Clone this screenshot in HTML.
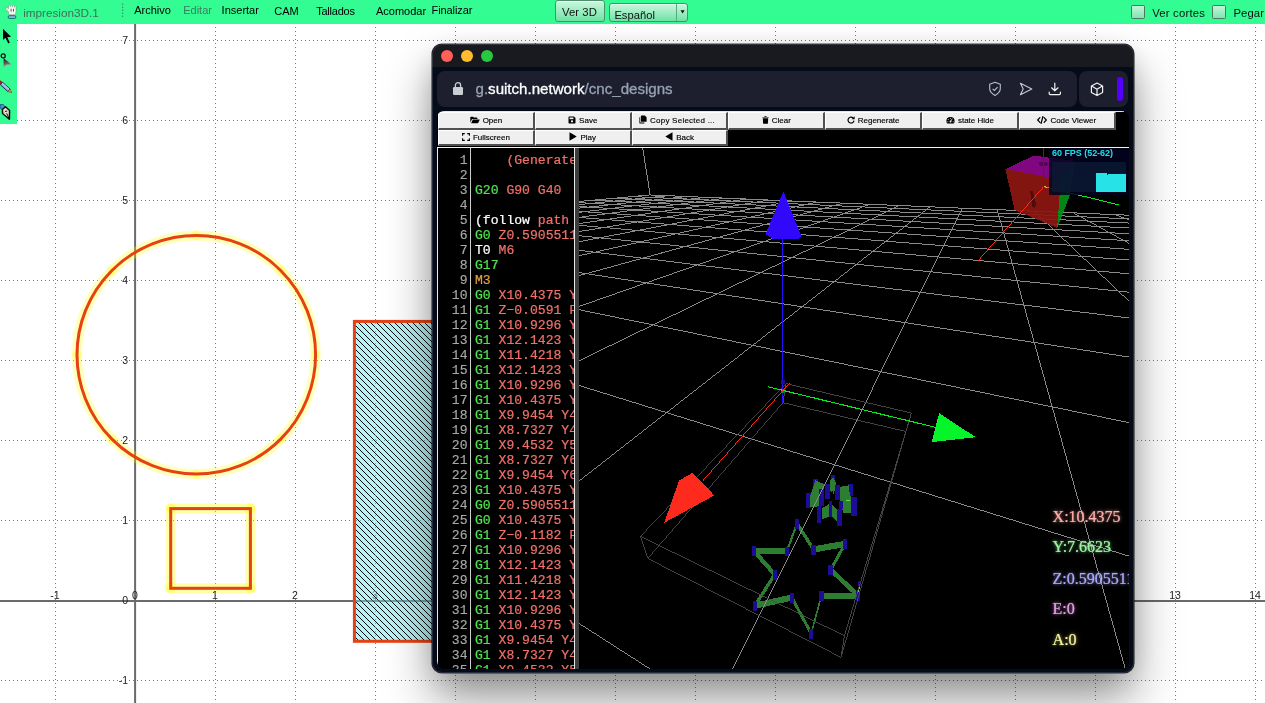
<!DOCTYPE html>
<html><head><meta charset="utf-8"><title>impresion3D</title>
<style>
html,body{margin:0;padding:0}
body{width:1265px;height:703px;position:relative;overflow:hidden;background:#fff;font-family:"Liberation Sans",sans-serif}
.abs{position:absolute}
#topbar{position:absolute;left:0;top:0;width:1265px;height:24px;background:#32fc92}
#lefttb{position:absolute;left:0;top:24px;width:17px;height:99.5px;background:#32fc92}
.menu{position:absolute;top:3.5px;font-size:11px;color:#000;white-space:pre;line-height:13px}
.gbtn{position:absolute;box-sizing:border-box;border:1px solid #4e8e6c;border-radius:3px;background:linear-gradient(#c9f7de,#6fe3a6);box-shadow:inset 0 1px 0 #e8fff2}
.axl{position:absolute;font-size:10.5px;color:#222;line-height:10px;white-space:pre}
#win{position:absolute;left:432.2px;top:44.4px;width:701.4px;height:628.7px;border-radius:10px;background:#060b1a;box-shadow:0 0 0 0.6px rgba(0,0,0,.75),0 26px 48px 0 rgba(0,0,0,.4),0 8px 30px -6px rgba(0,0,0,.2);overflow:hidden}
.wb{position:absolute;box-sizing:border-box;height:17px;background:#efefef;border-top:1px solid #fff;border-left:1px solid #fff;border-right:2px solid #505050;border-bottom:2px solid #505050;font-size:8px;line-height:15px;color:#000;text-align:center;white-space:pre;-webkit-text-stroke:0.15px #000}
.wb svg{vertical-align:-1px;margin-right:3px}
.cl{will-change:transform;position:absolute;left:0;height:15px;line-height:15px;white-space:pre;font-family:"Liberation Mono",monospace;font-size:13.08px;-webkit-text-stroke:0.22px}
.ln{will-change:transform;position:absolute;left:0;width:29.5px;text-align:right;height:15px;line-height:15px;font-family:"Liberation Mono",monospace;font-size:13.08px;color:#a8a8a8;-webkit-text-stroke:0.15px}
.g{color:#4ee44e}.s{color:#f2706a}.w{color:#fff}.o{color:#e2a03c}
.ro{position:absolute;font-family:"Liberation Serif",serif;font-size:16px;line-height:18px;white-space:pre}
</style></head><body><div id="root" style="position:absolute;left:0;top:0;width:1265px;height:703px;will-change:transform">
<svg class="abs" style="left:0;top:0" width="1265" height="703" viewBox="0 0 1265 703">
<line x1="55.5" y1="23" x2="55.5" y2="703" stroke="#7d7d7d" stroke-width="1" stroke-dasharray="1 3" stroke-dashoffset="0"/>
<line x1="215.5" y1="23" x2="215.5" y2="703" stroke="#7d7d7d" stroke-width="1" stroke-dasharray="1 3" stroke-dashoffset="0"/>
<line x1="295.5" y1="23" x2="295.5" y2="703" stroke="#7d7d7d" stroke-width="1" stroke-dasharray="1 3" stroke-dashoffset="0"/>
<line x1="375.5" y1="23" x2="375.5" y2="703" stroke="#7d7d7d" stroke-width="1" stroke-dasharray="1 3" stroke-dashoffset="0"/>
<line x1="455.5" y1="23" x2="455.5" y2="703" stroke="#7d7d7d" stroke-width="1" stroke-dasharray="1 3" stroke-dashoffset="0"/>
<line x1="535.5" y1="23" x2="535.5" y2="703" stroke="#7d7d7d" stroke-width="1" stroke-dasharray="1 3" stroke-dashoffset="0"/>
<line x1="615.5" y1="23" x2="615.5" y2="703" stroke="#7d7d7d" stroke-width="1" stroke-dasharray="1 3" stroke-dashoffset="0"/>
<line x1="695.5" y1="23" x2="695.5" y2="703" stroke="#7d7d7d" stroke-width="1" stroke-dasharray="1 3" stroke-dashoffset="0"/>
<line x1="775.5" y1="23" x2="775.5" y2="703" stroke="#7d7d7d" stroke-width="1" stroke-dasharray="1 3" stroke-dashoffset="0"/>
<line x1="855.5" y1="23" x2="855.5" y2="703" stroke="#7d7d7d" stroke-width="1" stroke-dasharray="1 3" stroke-dashoffset="0"/>
<line x1="935.5" y1="23" x2="935.5" y2="703" stroke="#7d7d7d" stroke-width="1" stroke-dasharray="1 3" stroke-dashoffset="0"/>
<line x1="1015.5" y1="23" x2="1015.5" y2="703" stroke="#7d7d7d" stroke-width="1" stroke-dasharray="1 3" stroke-dashoffset="0"/>
<line x1="1095.5" y1="23" x2="1095.5" y2="703" stroke="#7d7d7d" stroke-width="1" stroke-dasharray="1 3" stroke-dashoffset="0"/>
<line x1="1175.5" y1="23" x2="1175.5" y2="703" stroke="#7d7d7d" stroke-width="1" stroke-dasharray="1 3" stroke-dashoffset="0"/>
<line x1="1255.5" y1="23" x2="1255.5" y2="703" stroke="#7d7d7d" stroke-width="1" stroke-dasharray="1 3" stroke-dashoffset="0"/>
<line x1="0" y1="40.5" x2="1265" y2="40.5" stroke="#7d7d7d" stroke-width="1" stroke-dasharray="1 3" stroke-dashoffset="3"/>
<line x1="0" y1="120.5" x2="1265" y2="120.5" stroke="#7d7d7d" stroke-width="1" stroke-dasharray="1 3" stroke-dashoffset="3"/>
<line x1="0" y1="200.5" x2="1265" y2="200.5" stroke="#7d7d7d" stroke-width="1" stroke-dasharray="1 3" stroke-dashoffset="3"/>
<line x1="0" y1="280.5" x2="1265" y2="280.5" stroke="#7d7d7d" stroke-width="1" stroke-dasharray="1 3" stroke-dashoffset="3"/>
<line x1="0" y1="360.5" x2="1265" y2="360.5" stroke="#7d7d7d" stroke-width="1" stroke-dasharray="1 3" stroke-dashoffset="3"/>
<line x1="0" y1="440.5" x2="1265" y2="440.5" stroke="#7d7d7d" stroke-width="1" stroke-dasharray="1 3" stroke-dashoffset="3"/>
<line x1="0" y1="520.5" x2="1265" y2="520.5" stroke="#7d7d7d" stroke-width="1" stroke-dasharray="1 3" stroke-dashoffset="3"/>
<line x1="0" y1="680.5" x2="1265" y2="680.5" stroke="#7d7d7d" stroke-width="1" stroke-dasharray="1 3" stroke-dashoffset="3"/>
<line x1="135.1" y1="24" x2="135.1" y2="703" stroke="#6a6a6a" stroke-width="2"/>
<line x1="0" y1="601" x2="1265" y2="601" stroke="#6a6a6a" stroke-width="2"/>
<defs><pattern id="hatch" width="6" height="6" patternUnits="userSpaceOnUse"><rect width="6" height="6" fill="#b9f1f5"/><path d="M-1,-1 L7,7 M-1,5 L1,7 M5,-1 L7,1" stroke="#000" stroke-width="0.95"/></pattern></defs>
<rect x="354.4" y="321.4" width="120" height="319.9" fill="url(#hatch)" stroke="#e64114" stroke-width="3"/><line x1="356" y1="601" x2="440" y2="601" stroke="#3c6e78" stroke-opacity="0.6" stroke-width="2"/><line x1="375.5" y1="323" x2="375.5" y2="640" stroke="#4f8a94" stroke-opacity="0.7" stroke-width="1" stroke-dasharray="1 3" stroke-dashoffset="0"/><path d="M356,360.5H440M356,440.5H440M356,520.5H440" stroke="#4f8a94" stroke-opacity="0.7" stroke-width="1" stroke-dasharray="1 3" fill="none"/>
<circle cx="196.3" cy="354.8" r="119.3" fill="none" stroke="#ffff00" stroke-opacity="0.28" stroke-width="10"/>
<circle cx="315.6" cy="354.8" r="4.8" fill="#ffff00" fill-opacity="0.3"/>
<circle cx="280.7" cy="439.2" r="4.8" fill="#ffff00" fill-opacity="0.3"/>
<circle cx="196.3" cy="474.1" r="4.8" fill="#ffff00" fill-opacity="0.3"/>
<circle cx="111.9" cy="439.2" r="4.8" fill="#ffff00" fill-opacity="0.3"/>
<circle cx="77.0" cy="354.8" r="4.8" fill="#ffff00" fill-opacity="0.3"/>
<circle cx="111.9" cy="270.4" r="4.8" fill="#ffff00" fill-opacity="0.3"/>
<circle cx="196.3" cy="235.5" r="4.8" fill="#ffff00" fill-opacity="0.3"/>
<circle cx="280.7" cy="270.4" r="4.8" fill="#ffff00" fill-opacity="0.3"/>
<circle cx="196.3" cy="354.8" r="119.3" fill="none" stroke="#e64114" stroke-width="3"/>
<line x1="170.7" y1="508.6" x2="250.4" y2="508.6" stroke="#ffff00" stroke-opacity="0.34" stroke-width="10" stroke-linecap="round"/>
<line x1="250.4" y1="508.6" x2="250.4" y2="588.3" stroke="#ffff00" stroke-opacity="0.34" stroke-width="10" stroke-linecap="round"/>
<line x1="250.4" y1="588.3" x2="170.7" y2="588.3" stroke="#ffff00" stroke-opacity="0.34" stroke-width="10" stroke-linecap="round"/>
<line x1="170.7" y1="588.3" x2="170.7" y2="508.6" stroke="#ffff00" stroke-opacity="0.34" stroke-width="10" stroke-linecap="round"/>
<rect x="170.7" y="508.6" width="79.7" height="79.7" fill="none" stroke="#e64114" stroke-width="3"/>
</svg>
<div class="axl" style="left:108px;width:20px;text-align:right;top:35px">7</div>
<div class="axl" style="left:108px;width:20px;text-align:right;top:115px">6</div>
<div class="axl" style="left:108px;width:20px;text-align:right;top:195px">5</div>
<div class="axl" style="left:108px;width:20px;text-align:right;top:275px">4</div>
<div class="axl" style="left:108px;width:20px;text-align:right;top:355px">3</div>
<div class="axl" style="left:108px;width:20px;text-align:right;top:435px">2</div>
<div class="axl" style="left:108px;width:20px;text-align:right;top:515px">1</div>
<div class="axl" style="left:108px;width:20px;text-align:right;top:595px">0</div>
<div class="axl" style="left:108px;width:20px;text-align:right;top:675px">-1</div>
<div class="axl" style="left:40px;width:30px;text-align:center;top:590px">-1</div>
<div class="axl" style="left:120px;width:30px;text-align:center;top:590px">0</div>
<div class="axl" style="left:200px;width:30px;text-align:center;top:590px">1</div>
<div class="axl" style="left:280px;width:30px;text-align:center;top:590px">2</div>
<div class="axl" style="left:360px;width:30px;text-align:center;top:590px;opacity:0.5">3</div>
<div class="axl" style="left:440px;width:30px;text-align:center;top:590px">4</div>
<div class="axl" style="left:520px;width:30px;text-align:center;top:590px">5</div>
<div class="axl" style="left:600px;width:30px;text-align:center;top:590px">6</div>
<div class="axl" style="left:680px;width:30px;text-align:center;top:590px">7</div>
<div class="axl" style="left:760px;width:30px;text-align:center;top:590px">8</div>
<div class="axl" style="left:840px;width:30px;text-align:center;top:590px">9</div>
<div class="axl" style="left:920px;width:30px;text-align:center;top:590px">10</div>
<div class="axl" style="left:1000px;width:30px;text-align:center;top:590px">11</div>
<div class="axl" style="left:1080px;width:30px;text-align:center;top:590px">12</div>
<div class="axl" style="left:1160px;width:30px;text-align:center;top:590px">13</div>
<div class="axl" style="left:1240px;width:30px;text-align:center;top:590px">14</div>
<div id="topbar"></div><div id="lefttb"></div>
<svg class="abs" style="left:0;top:0" width="24" height="24" viewBox="0 0 24 24">
<path d="M8.5,13.2 L8.5,11.7 L5.7,9.3 Q5,7.7 6.5,7.4 L8.5,8.7 L8.5,5.1 Q9.25,3.7 10,5.1 L10,6.4 L10.5,6.4 L10.5,5 Q11.25,3.6 12,5 L12,6.4 L12.6,6.4 L12.6,5.1 Q13.35,3.7 14.1,5.1 L14.1,6.9 L14.6,6.9 L14.6,6.4 Q15.3,5.1 16,6.4 L16,11.6 L15.4,14.7 L8.9,14.7 Z" fill="#f7f4f4" stroke="#8c7a7a" stroke-opacity="0.75" stroke-width="0.6" stroke-linejoin="round"/>
<path d="M11.1,8.8 V11.6 M13.5,8.8 V11.6" stroke="#3a3a3a" stroke-width="0.85" fill="none"/>
<path d="M10.25,5.2 V7.4 M12.3,5.1 V7.4 M14.3,6 V7.6" stroke="#b9aaaa" stroke-width="0.5" fill="none"/>
<rect x="8.3" y="15.8" width="7.4" height="2.5" rx="0.8" fill="#7fdcea" stroke="#124a5c" stroke-width="0.9"/>
</svg>
<div class="abs" style="left:23.2px;top:6px;font-size:11.75px;line-height:14px;color:#41705c;white-space:pre;letter-spacing:-0.02px">impresion3D.1</div>
<svg class="abs" style="left:121.2px;top:3px" width="4" height="16"><g fill="#2a9f63"><rect x="1" y="0.5" width="1.2" height="1.5"/><rect x="1" y="3.5" width="1.2" height="1.5"/><rect x="1" y="6.5" width="1.2" height="1.5"/><rect x="1" y="9.5" width="1.2" height="1.5"/><rect x="1" y="12.5" width="1.2" height="1.5"/></g></svg>
<div class="menu" style="left:134.2px;top:3.5px;color:#000;letter-spacing:0">Archivo</div>
<div class="menu" style="left:183.2px;top:3.5px;color:#3a7d5e;letter-spacing:0">Editar</div>
<div class="menu" style="left:221.6px;top:3.5px;color:#000;letter-spacing:0">Insertar</div>
<div class="menu" style="left:274.3px;top:4.5px;color:#000;letter-spacing:0">CAM</div>
<div class="menu" style="left:316.2px;top:4.5px;color:#000;letter-spacing:-0.22px">Tallados</div>
<div class="menu" style="left:376px;top:4.5px;color:#000;letter-spacing:0">Acomodar</div>
<div class="menu" style="left:431.6px;top:3.5px;color:#000;letter-spacing:-0.1px">Finalizar</div>
<div class="gbtn" style="left:554.5px;top:0px;width:50px;height:22px"></div>
<div class="abs" style="left:554.5px;width:50px;text-align:center;top:4.6px;font-size:11.3px;line-height:14px;color:#111;white-space:pre;letter-spacing:0.05px">Ver 3D</div>
<div class="gbtn" style="left:609.2px;top:2.5px;width:79.3px;height:19.5px"></div>
<div class="abs" style="left:675.8px;top:3.5px;width:1px;height:17.5px;background:#5aa880"></div>
<div class="abs" style="left:614.4px;top:7.6px;font-size:11.2px;line-height:14px;color:#111;white-space:pre;letter-spacing:0.02px">Español</div>
<svg class="abs" style="left:679px;top:9px" width="8" height="6"><path d="M1.5,1.2 L5.7,1.2 L3.6,4.6 Z" fill="#111"/></svg>
<div class="abs" style="left:1131px;top:5.2px;width:13.6px;height:13.6px;box-sizing:border-box;border:1px solid #4f7563;border-radius:1.5px;background:linear-gradient(#c4f5da,#7ee6af)"></div>
<div class="abs" style="left:1212px;top:5.2px;width:13.6px;height:13.6px;box-sizing:border-box;border:1px solid #4f7563;border-radius:1.5px;background:linear-gradient(#c4f5da,#7ee6af)"></div>
<div class="abs" style="left:1152.2px;top:5.5px;font-size:11.3px;line-height:14px;color:#111;white-space:pre;letter-spacing:0.2px">Ver cortes</div>
<div class="abs" style="left:1233.4px;top:5.5px;font-size:11.3px;line-height:14px;color:#111;white-space:pre;letter-spacing:0.1px">Pegar</div>
<svg class="abs" style="left:0;top:24px" width="17" height="100" viewBox="0 0 17 100"><defs><linearGradient id="ng" x1="0.2" y1="0" x2="0.4" y2="1"><stop offset="0" stop-color="#1c1c1c"/><stop offset="0.55" stop-color="#5c5c5c"/><stop offset="1" stop-color="#c4c4c4"/></linearGradient><linearGradient id="pg" x1="0" y1="0" x2="0" y2="1"><stop offset="0" stop-color="#cfe6fa"/><stop offset="1" stop-color="#5aa0e0"/></linearGradient></defs><path d="M3,4.8 L3,16 L5.4,13.8 L8.3,19.4 L9.8,18.6 L7.2,13.3 L11,12.8 Z" fill="#000"/><circle cx="3.2" cy="31.9" r="2" fill="none" stroke="#111" stroke-width="1.3"/><path d="M3.6,34 L11.4,40.6 L6.4,40.8 L3.6,43.6 Z" fill="url(#ng)"/><g transform="translate(0,58.2) rotate(42)"><rect x="-1" y="-1.7" width="3" height="3.4" fill="#b01a14"/><rect x="2" y="-1.7" width="10" height="3.4" fill="url(#pg)" stroke="#1a2238" stroke-width="0.8"/><path d="M12,-1.7 L15.6,0 L12,1.7 Z" fill="#f0a860" stroke="#6a3a14" stroke-width="0.6"/></g><path d="M0,80.8 L3,80.3 L5.3,83 L2.4,85.6 L0,84 Z" fill="#4a90d0" stroke="#1a3a6a" stroke-width="0.7"/><path d="M2.4,85.5 L5.5,82.8 L9.6,86.5 L9.4,95.3 L2.6,89.5 Z" fill="#ebe2cc" stroke="#0c0c0c" stroke-width="1.5" stroke-linejoin="round"/><path d="M9.2,94.6 L6.6,89.2" stroke="#000" stroke-width="0.9"/><path d="M5,88.2 Q5.6,86.4 7.2,87.2" stroke="#000" stroke-width="0.9" fill="none"/></svg>
<div id="win">
<div class="abs" style="left:0;top:0;width:701px;height:22.6px;background:#191a1f"></div>
<div class="abs" style="left:8.7px;top:5.5px;width:12.2px;height:12.2px;border-radius:50%;background:#fe5f57"></div>
<div class="abs" style="left:28.7px;top:5.5px;width:12.2px;height:12.2px;border-radius:50%;background:#febc2e"></div>
<div class="abs" style="left:48.7px;top:5.5px;width:12.2px;height:12.2px;border-radius:50%;background:#28c840"></div>
<div class="abs" style="left:5.2px;top:26.6px;width:640px;height:35.7px;border-radius:8px;background:#1d1f2e"></div>
<div class="abs" style="left:647.1px;top:26.6px;width:49px;height:35.7px;border-radius:8px;background:#1d1f2e"></div>
<svg class="abs" style="left:19.8px;top:36.6px" width="12" height="15" viewBox="0 0 12 15"><path d="M3.4,6.4 V4.2 A2.6,2.6 0 0 1 8.6,4.2 V6.4" fill="none" stroke="#c9ced3" stroke-width="1.3"/><rect x="1" y="6" width="10" height="8" rx="1.2" fill="#c9ced3"/></svg>
<div class="abs" style="left:43.3px;top:35.6px;font-size:15.1px;line-height:18px;white-space:pre;color:#98a3b4;-webkit-text-stroke:0.3px"><span>g.</span><span style="color:#fff">suitch.network</span><span>/cnc_designs</span></div>
<svg class="abs" style="left:554.8px;top:35.6px" width="16" height="18" viewBox="0 0 16 18"><path d="M8,2.2 L13.3,4.2 V8.6 Q13.3,12.8 8,15.4 Q2.7,12.8 2.7,8.6 V4.2 Z" fill="none" stroke="#b9bec8" stroke-width="1.1" stroke-linejoin="round"/><path d="M5.6,8.8 L7.4,10.5 L10.6,7.2" fill="none" stroke="#b9bec8" stroke-width="1.1"/></svg>
<svg class="abs" style="left:584.8px;top:35.6px" width="18" height="18" viewBox="0 0 18 18"><path d="M3.4,3.2 L14.8,9 L3.4,14.8 L6.2,9 Z" fill="none" stroke="#c4c8d0" stroke-width="1.1" stroke-linejoin="round"/></svg>
<svg class="abs" style="left:613.8px;top:35.6px" width="18" height="18" viewBox="0 0 18 18"><path d="M8.8,3.2 V10.6 M5.6,7.8 L8.8,10.8 L12,7.8 M3.2,12 V13.6 Q3.2,14.6 4.2,14.6 H13.4 Q14.4,14.6 14.4,13.6 V12" fill="none" stroke="#f1f2f5" stroke-width="1.2" stroke-linecap="round" stroke-linejoin="round"/></svg>
<svg class="abs" style="left:655.8px;top:35.6px" width="18" height="18" viewBox="0 0 18 18"><path d="M9,3 L14.6,6 V12.4 L9,15.6 L3.4,12.4 V6 Z M3.6,6.1 L9,9.2 L14.4,6.1 M9,9.2 V15.4" fill="none" stroke="#f1f2f5" stroke-width="1.2" stroke-linejoin="round"/></svg>
<div class="abs" style="left:684.7px;top:32.6px;width:6.2px;height:24.2px;border-radius:3.1px;background:#5400fe"></div>
<div class="abs" style="left:4.8px;top:66.6px;width:692.5px;height:558.4px;background:#000;border-radius:7px 7px 8px 8px;overflow:hidden">
<div class="abs" style="left:0;top:0;width:687px;height:1.2px;background:#e6e6e6"></div>
<div class="wb" style="left:1.0px;top:1.4px;width:96.9px;height:17.4px;line-height:15.6px"><svg width="10" height="8" viewBox="0 0 10 8"><path d="M0.3,6.6 L0.3,1.3 Q0.3,0.7 0.9,0.7 L3,0.7 L3.9,1.6 L6.8,1.6 Q7.4,1.6 7.4,2.2 L7.4,2.9 L2.7,2.9 Q2.1,2.9 1.8,3.5 Z M1.1,7.2 L2.6,3.9 Q2.8,3.5 3.3,3.5 L9.4,3.5 Q9.9,3.5 9.6,4.1 L8.3,6.8 Q8.1,7.2 7.6,7.2 Z" fill="#000"/></svg>Open</div>
<div class="wb" style="left:97.8px;top:1.4px;width:96.9px;height:17.4px;line-height:15.6px"><svg width="8" height="8" viewBox="0 0 8 8"><path d="M0.5,1.2 Q0.5,0.5 1.2,0.5 L5.9,0.5 L7.5,2.1 L7.5,6.8 Q7.5,7.5 6.8,7.5 L1.2,7.5 Q0.5,7.5 0.5,6.8 Z" fill="#000"/><rect x="1.6" y="1.5" width="3.8" height="1.7" fill="#efefef"/><circle cx="4" cy="5.3" r="1.15" fill="#efefef"/></svg>Save</div>
<div class="wb" style="left:194.6px;top:1.4px;width:96.9px;height:17.4px;line-height:15.6px;letter-spacing:0.24px;padding-right:5px"><svg width="8" height="9" viewBox="0 0 8 9"><path d="M2.4,0.4 L5.8,0.4 L7.6,2.2 L7.6,6.2 Q7.6,6.7 7.1,6.7 L2.4,6.7 Q1.9,6.7 1.9,6.2 L1.9,0.9 Q1.9,0.4 2.4,0.4 Z" fill="#000"/><path d="M1.2,2.2 L0.4,2.2 L0.4,8.1 Q0.4,8.6 0.9,8.6 L5.4,8.6 L5.4,7.4 L1.2,7.4 Z" fill="#000"/></svg>Copy Selected ...</div>
<div class="wb" style="left:291.4px;top:1.4px;width:96.9px;height:17.4px;line-height:15.6px"><svg width="7" height="8" viewBox="0 0 7 8"><path d="M0.3,1.6 L0.3,0.9 L2.2,0.9 L2.6,0.3 L4.4,0.3 L4.8,0.9 L6.7,0.9 L6.7,1.6 Z M0.8,2.2 L6.2,2.2 L5.9,7.2 Q5.85,7.8 5.3,7.8 L1.7,7.8 Q1.15,7.8 1.1,7.2 Z" fill="#000"/></svg>Clear</div>
<div class="wb" style="left:388.2px;top:1.4px;width:96.9px;height:17.4px;line-height:15.6px"><svg width="8" height="8" viewBox="0 0 8 8"><path d="M6.3,2.1 A3,3 0 1 0 7,4.6" fill="none" stroke="#000" stroke-width="1.15"/><path d="M4.7,3.2 L7.6,3.2 L7.6,0.3 Z" fill="#000"/></svg>Regenerate</div>
<div class="wb" style="left:485.0px;top:1.4px;width:96.9px;height:17.4px;line-height:15.6px"><svg width="9" height="8" viewBox="0 0 9 8"><path d="M0.4,5 A4.1,4.1 0 0 1 8.6,5 Q8.6,6.6 7.8,7.6 L1.2,7.6 Q0.4,6.6 0.4,5 Z" fill="#000"/><circle cx="4.5" cy="5.6" r="1" fill="#efefef"/><path d="M4.5,5.6 L6.3,2.6" stroke="#efefef" stroke-width="0.8"/><circle cx="2.2" cy="3.6" r="0.5" fill="#efefef"/><circle cx="4.5" cy="2.3" r="0.5" fill="#efefef"/><circle cx="1.8" cy="5.8" r="0.5" fill="#efefef"/><circle cx="7.2" cy="5.8" r="0.5" fill="#efefef"/></svg>state Hide</div>
<div class="wb" style="left:581.8px;top:1.4px;width:96.9px;height:17.4px;line-height:15.6px"><svg width="10" height="8" viewBox="0 0 10 8"><path d="M2.9,1.6 L0.7,4 L2.9,6.4 M7.1,1.6 L9.3,4 L7.1,6.4 M5.9,0.5 L4.1,7.5" fill="none" stroke="#000" stroke-width="1.2" stroke-linecap="round" stroke-linejoin="round"/></svg>Code Viewer</div>
<div class="wb" style="left:1.0px;top:18.8px;width:96.9px;height:16.4px;line-height:14.6px"><svg width="8" height="8" viewBox="0 0 8 8"><path d="M0.6,2.8 V0.6 H2.8 M5.2,0.6 H7.4 V2.8 M7.4,5.2 V7.4 H5.2 M2.8,7.4 H0.6 V5.2" fill="none" stroke="#000" stroke-width="1.1"/></svg>Fullscreen</div>
<div class="wb" style="left:97.8px;top:18.8px;width:96.9px;height:16.4px;line-height:14.6px"><svg width="8" height="9" viewBox="0 0 7 8"><path d="M0.4,0.2 L6.8,4 L0.4,7.8 Z" fill="#000"/></svg>Play</div>
<div class="wb" style="left:194.6px;top:18.8px;width:96.9px;height:16.4px;line-height:14.6px"><svg width="8" height="9" viewBox="0 0 7 8"><path d="M6.6,0.2 L0.2,4 L6.6,7.8 Z" fill="#000"/></svg>Back</div>
<div class="abs" style="left:0;top:35.6px;width:693px;height:1px;background:#f2f2f2"></div>
<div class="abs" style="left:0;top:36.6px;width:138px;height:522px;background:#000;overflow:hidden;box-sizing:border-box;border-left:1px solid #e8e8e8;border-right:1px solid #e8e8e8">
<div class="abs" style="left:32px;top:0;width:1px;height:522px;background:#cfcfcf"></div>
<div class="ln" style="top:5.2px">1</div>
<div class="cl" style="left:36.6px;top:5.2px"><span class="s">    (Generated by</span></div>
<div class="ln" style="top:20.2px">2</div>
<div class="ln" style="top:35.2px">3</div>
<div class="cl" style="left:36.6px;top:35.2px"><span class="g">G20</span><span class="s"> G90 G40</span></div>
<div class="ln" style="top:50.2px">4</div>
<div class="ln" style="top:65.2px">5</div>
<div class="cl" style="left:36.6px;top:65.2px"><span class="w">(follow</span><span class="s"> path 1)</span></div>
<div class="ln" style="top:80.2px">6</div>
<div class="cl" style="left:36.6px;top:80.2px"><span class="g">G0</span><span class="s"> Z0.59055118</span></div>
<div class="ln" style="top:95.2px">7</div>
<div class="cl" style="left:36.6px;top:95.2px"><span class="w">T0</span><span class="s"> M6</span></div>
<div class="ln" style="top:110.2px">8</div>
<div class="cl" style="left:36.6px;top:110.2px"><span class="g">G17</span></div>
<div class="ln" style="top:125.2px">9</div>
<div class="cl" style="left:36.6px;top:125.2px"><span class="o">M3</span></div>
<div class="ln" style="top:140.2px">10</div>
<div class="cl" style="left:36.6px;top:140.2px"><span class="g">G0</span><span class="s"> X10.4375 Y7.6623</span></div>
<div class="ln" style="top:155.2px">11</div>
<div class="cl" style="left:36.6px;top:155.2px"><span class="g">G1</span><span class="s"> Z−0.0591 F30</span></div>
<div class="ln" style="top:170.2px">12</div>
<div class="cl" style="left:36.6px;top:170.2px"><span class="g">G1</span><span class="s"> X10.9296 Y6.81</span></div>
<div class="ln" style="top:185.2px">13</div>
<div class="cl" style="left:36.6px;top:185.2px"><span class="g">G1</span><span class="s"> X12.1423 Y6.81</span></div>
<div class="ln" style="top:200.2px">14</div>
<div class="cl" style="left:36.6px;top:200.2px"><span class="g">G1</span><span class="s"> X11.4218 Y5.83</span></div>
<div class="ln" style="top:215.2px">15</div>
<div class="cl" style="left:36.6px;top:215.2px"><span class="g">G1</span><span class="s"> X12.1423 Y4.85</span></div>
<div class="ln" style="top:230.2px">16</div>
<div class="cl" style="left:36.6px;top:230.2px"><span class="g">G1</span><span class="s"> X10.9296 Y4.85</span></div>
<div class="ln" style="top:245.2px">17</div>
<div class="cl" style="left:36.6px;top:245.2px"><span class="g">G1</span><span class="s"> X10.4375 Y3.99</span></div>
<div class="ln" style="top:260.2px">18</div>
<div class="cl" style="left:36.6px;top:260.2px"><span class="g">G1</span><span class="s"> X9.9454 Y4.85</span></div>
<div class="ln" style="top:275.2px">19</div>
<div class="cl" style="left:36.6px;top:275.2px"><span class="g">G1</span><span class="s"> X8.7327 Y4.85</span></div>
<div class="ln" style="top:290.2px">20</div>
<div class="cl" style="left:36.6px;top:290.2px"><span class="g">G1</span><span class="s"> X9.4532 Y5.83</span></div>
<div class="ln" style="top:305.2px">21</div>
<div class="cl" style="left:36.6px;top:305.2px"><span class="g">G1</span><span class="s"> X8.7327 Y6.81</span></div>
<div class="ln" style="top:320.2px">22</div>
<div class="cl" style="left:36.6px;top:320.2px"><span class="g">G1</span><span class="s"> X9.9454 Y6.81</span></div>
<div class="ln" style="top:335.2px">23</div>
<div class="cl" style="left:36.6px;top:335.2px"><span class="g">G1</span><span class="s"> X10.4375 Y7.66</span></div>
<div class="ln" style="top:350.2px">24</div>
<div class="cl" style="left:36.6px;top:350.2px"><span class="g">G0</span><span class="s"> Z0.59055118</span></div>
<div class="ln" style="top:365.2px">25</div>
<div class="cl" style="left:36.6px;top:365.2px"><span class="g">G0</span><span class="s"> X10.4375 Y7.66</span></div>
<div class="ln" style="top:380.2px">26</div>
<div class="cl" style="left:36.6px;top:380.2px"><span class="g">G1</span><span class="s"> Z−0.1182 F30</span></div>
<div class="ln" style="top:395.2px">27</div>
<div class="cl" style="left:36.6px;top:395.2px"><span class="g">G1</span><span class="s"> X10.9296 Y6.81</span></div>
<div class="ln" style="top:410.2px">28</div>
<div class="cl" style="left:36.6px;top:410.2px"><span class="g">G1</span><span class="s"> X12.1423 Y6.81</span></div>
<div class="ln" style="top:425.2px">29</div>
<div class="cl" style="left:36.6px;top:425.2px"><span class="g">G1</span><span class="s"> X11.4218 Y5.83</span></div>
<div class="ln" style="top:440.2px">30</div>
<div class="cl" style="left:36.6px;top:440.2px"><span class="g">G1</span><span class="s"> X12.1423 Y4.85</span></div>
<div class="ln" style="top:455.2px">31</div>
<div class="cl" style="left:36.6px;top:455.2px"><span class="g">G1</span><span class="s"> X10.9296 Y4.85</span></div>
<div class="ln" style="top:470.2px">32</div>
<div class="cl" style="left:36.6px;top:470.2px"><span class="g">G1</span><span class="s"> X10.4375 Y3.99</span></div>
<div class="ln" style="top:485.2px">33</div>
<div class="cl" style="left:36.6px;top:485.2px"><span class="g">G1</span><span class="s"> X9.9454 Y4.85</span></div>
<div class="ln" style="top:500.2px">34</div>
<div class="cl" style="left:36.6px;top:500.2px"><span class="g">G1</span><span class="s"> X8.7327 Y4.85</span></div>
<div class="ln" style="top:515.2px">35</div>
<div class="cl" style="left:36.6px;top:515.2px"><span class="g">G1</span><span class="s"> X9.4532 Y5.83</span></div>
<div class="ln" style="top:530.2px">36</div>
<div class="cl" style="left:36.6px;top:530.2px"><span class="g">G1</span><span class="s"> X8.7327 Y6.81</span></div>
</div>
<div class="abs" style="left:138px;top:36.6px;width:3.6px;height:522px;background:#3d3d3d"></div>
<svg class="abs" style="left:141.60px;top:36.60px" width="551.0" height="521.2" viewBox="578.6 147.6 551.0 521.2" shape-rendering="crispEdges">
<rect x="578.6" y="147.6" width="551.0" height="521.2" fill="#000"/>
<path d="M796.6,520.0L813.1,545.9L813.1,552.2L796.6,526.3Z" fill="#2d7e32"/>
<path d="M813.1,545.9L844.5,540.4L844.5,546.7L813.1,552.2Z" fill="#2d7e32"/>
<path d="M844.5,540.4L830.3,566.3L830.3,572.6L844.5,546.7Z" fill="#2d7e32"/>
<path d="M830.3,566.3L858.0,592.2L858.0,598.5L830.3,572.6Z" fill="#2d7e32"/>
<path d="M858.0,592.2L821.0,592.2L821.0,598.5L858.0,598.5Z" fill="#2d7e32"/>
<path d="M821.0,592.2L810.8,630.1L810.8,636.4L821.0,598.5Z" fill="#2d7e32"/>
<path d="M810.8,630.1L791.4,594.0L791.4,600.3L810.8,636.4Z" fill="#2d7e32"/>
<path d="M791.4,594.0L754.4,602.3L754.4,608.6L791.4,600.3Z" fill="#2d7e32"/>
<path d="M754.4,602.3L774.4,570.9L774.4,577.2L754.4,608.6Z" fill="#2d7e32"/>
<path d="M774.4,570.9L753.5,547.4L753.5,553.7L774.4,577.2Z" fill="#2d7e32"/>
<path d="M753.5,547.4L786.4,547.8L786.4,554.1L753.5,553.7Z" fill="#2d7e32"/>
<path d="M786.4,547.8L796.6,520.0L796.6,526.3L786.4,554.1Z" fill="#2d7e32"/>
<rect x="794.3" y="518.7" width="4.4" height="9.6" fill="#1c0c96"/>
<rect x="810.8" y="544.6" width="4.4" height="9.6" fill="#1c0c96"/>
<rect x="842.2" y="539.1" width="4.4" height="9.6" fill="#1c0c96"/>
<rect x="828.0" y="565.0" width="4.4" height="9.6" fill="#1c0c96"/>
<rect x="855.7" y="590.9" width="4.4" height="9.6" fill="#1c0c96"/>
<rect x="818.7" y="590.9" width="4.4" height="9.6" fill="#1c0c96"/>
<rect x="808.5" y="628.8" width="4.4" height="9.6" fill="#1c0c96"/>
<rect x="789.1" y="592.7" width="4.4" height="9.6" fill="#1c0c96"/>
<rect x="752.1" y="601.0" width="4.4" height="9.6" fill="#1c0c96"/>
<rect x="772.1" y="569.6" width="4.4" height="9.6" fill="#1c0c96"/>
<rect x="751.2" y="546.1" width="4.4" height="9.6" fill="#1c0c96"/>
<rect x="784.1" y="546.5" width="4.4" height="9.6" fill="#1c0c96"/>
<path d="M856.5,594 L859.5,586.5" stroke="#7dff7d" stroke-width="0.8"/>
<rect x="857.6" y="581" width="3.2" height="5" fill="#1c0c96"/>
<rect x="812.4" y="478.4" width="5.5" height="13.4" fill="#1c0c96"/>
<rect x="830.4" y="474.5" width="4.5" height="10.5" fill="#1c0c96"/>
<rect x="847.8" y="483.4" width="5.0" height="12.5" fill="#1c0c96"/>
<rect x="805.5" y="492.4" width="5.5" height="15.4" fill="#1c0c96"/>
<rect x="840.3" y="491.4" width="5.5" height="7.5" fill="#1c0c96"/>
<path d="M814.9,479.9L823.9,483.9L823.9,494.9L818.9,506.8L809.9,506.8L809.9,494.9Z" fill="#2d7e32"/>
<path d="M829.9,479.9L833.3,477.0L835.8,483.9L833.3,493.4L829.9,490.9Z" fill="#2d7e32"/>
<path d="M839.8,486.4L848.8,484.9L849.3,494.9L852.8,497.9L851.8,512.8L842.8,512.8L839.8,499.9Z" fill="#2d7e32"/>
<path d="M821.4,507.8L829.4,503.3L829.4,516.3L821.4,518.8Z" fill="#2d7e32"/>
<path d="M830.4,503.3L837.8,509.8L836.3,520.8L830.4,514.8Z" fill="#2d7e32"/>
<rect x="824.9" y="483.9" width="4.5" height="14.9" fill="#1c0c96"/>
<rect x="834.3" y="484.4" width="5.5" height="15.4" fill="#1c0c96"/>
<rect x="818.4" y="488.9" width="5.0" height="16.9" fill="#1c0c96"/>
<rect x="816.4" y="505.8" width="4.5" height="16.9" fill="#1c0c96"/>
<rect x="836.3" y="508.8" width="5.5" height="16.9" fill="#1c0c96"/>
<rect x="850.3" y="496.4" width="6.5" height="19.4" fill="#1c0c96"/>
<rect x="828.4" y="500.9" width="3.0" height="15.9" fill="#1c0c96"/>
<rect x="838.8" y="500.9" width="4.0" height="8.0" fill="#1c0c96"/>
<rect x="846.0" y="499.7" width="3.4" height="1.2" fill="#55e055"/>
<path d="M829.4,493.9L831.9,489.9L833.3,494.9L833.3,499.9L829.4,499.9Z" fill="#000"/>
<path d="M649.1,194.6L-13185.1,1468.1M666.8,195.4L-11696.3,1425.6M685.2,196.2L-10306.2,1385.9M704.5,197.0L-9005.2,1348.8M724.7,197.8L-8812.0,1448.6M745.9,198.7L-7501.3,1407.7M768.2,199.7L-6275.7,1369.4M791.6,200.6L-5852.1,1472.3M816.3,201.7L-4625.4,1430.1M842.3,202.8L-3479.3,1390.6M869.8,203.9L-2813.7,1496.6M898.8,205.2L-1675.8,1453.0M929.5,206.5L-613.7,1412.3M962.1,207.8L380.0,1374.1M996.8,209.3L1350.3,1476.5M1033.7,210.8L2323.8,1434.5M1073.0,212.5L3233.9,1395.2M1115.1,214.3L4456.1,1500.7M1160.3,216.2L5336.0,1457.3M1208.7,218.2L6157.8,1416.7M1261.0,220.4L6927.2,1378.8M1317.4,222.8L8425.7,1480.6M1378.5,225.4L9154.5,1438.8M1445.0,228.2L9836.3,1399.7M1517.6,231.2L11595.9,1504.6M649.1,194.6L1517.6,231.2M632.6,196.2L1576.0,238.6M614.3,197.8L1648.8,247.8M594.1,199.7L1742.0,259.6M571.5,201.8L1865.6,275.2M546.1,204.1L2037.3,296.9M517.4,206.8L2292.1,329.1M484.6,209.8L2709.5,381.8M446.9,213.3L3518.2,484.0M403.1,217.3L5753.7,766.5M351.5,222.0L10467.7,1466.2M289.8,227.7L8732.1,1525.3M214.8,234.6L6431.5,1511.1M121.6,243.2L4161.7,1497.2M2.7,254.2L1921.9,1483.4M-154.3,268.6L-288.3,1469.8M-370.9,288.5L-2469.5,1456.4M-689.4,317.9L-4622.4,1443.2M-1203.7,365.2L-6747.4,1430.1M-2174.1,454.5L-8845.1,1417.2M-4691.9,686.3L-11514.5,1473.5" fill="none" stroke="#8a8a8a" stroke-width="1" shape-rendering="crispEdges"/>
<path d="M649.8,195 L642.2,147" stroke="#8a8a8a" stroke-width="1" fill="none" shape-rendering="crispEdges"/>
<path d="M785.5,383.2L911,412.7M785.5,383.2L640,536M640,536L844,635.3M911,412.7L844,635.3M782.6,402.3L905.6,431.1M782.6,402.3L647.4,558.1M647.4,558.1L840.6,657M905.6,431.1L840.6,657M785.5,383.2L782.6,402.3M911,412.7L905.6,431.1M640,536L647.4,558.1M844,635.3L840.6,657" fill="none" stroke="#4a4a4a" stroke-width="0.9"/>
<path d="M782.5,236 L782.5,402.4" stroke="#2a10ff" stroke-width="1"/>
<path d="M783,191 L765.1,233.8 L772.9,238.8 L797.8,238.8 L801,235.8 Z" fill="#3108fb"/>
<rect x="780.6" y="379.5" width="4" height="4" fill="#1c0ea0"/>
<rect x="780.6" y="388.6" width="4" height="4" fill="#167a28"/>
<path d="M768,386.5 L935,426.9" stroke="#00f01c" stroke-width="1.1"/>
<path d="M938.8,412.7 L975.2,436.8 L931.2,441.7 Z" fill="#05f52a"/>
<path d="M789.5,382.3 L702.5,480.3" stroke="#ff2a1a" stroke-width="1"/>
<path d="M663.8,522.4 L678.6,480.3 L692.2,472.3 L713.9,495 Z" fill="#ff2a1e"/>
<path d="M1005,168.7 L1033.4,155.2 L1075,160.6 L1060.3,179.6 Z" fill="#8a078a" fill-opacity="0.93"/>
<path d="M1005,168.7 L1060.3,179.6 L1056.8,227.5 L1014.2,209.6 Z" fill="#8c1711" fill-opacity="0.93"/>
<path d="M1060.3,179.6 L1075,160.6 L1069,196.2 L1056.8,227.5 Z" fill="#049018" fill-opacity="0.93"/>
<path d="M1029.6,190 L1032.4,190.8 L1035.6,204 L1034.4,207.6 L1031.8,206.4 Z" fill="#4a0c08" fill-opacity="0.85"/>
<ellipse cx="1043" cy="163.5" rx="5" ry="2" fill="#4a064a" fill-opacity="0.8"/>
<path d="M1043.4,147.6 L1043.4,186.2" stroke="#2a10ff" stroke-width="1"/>
<path d="M1043.4,186.2 L977.5,260.5" stroke="#ff2a1a" stroke-width="1"/>
<path d="M1043.4,186.2 L1118.5,204.5" stroke="#00f01c" stroke-width="1"/>
<path d="M1043.6,186 L1046.5,186.8" stroke="#c8c820" stroke-width="1"/>
</svg>
<div class="abs" style="left:612px;top:36.6px;width:80.5px;height:47.2px;background:#02021f;opacity:0.86"></div>
<div class="abs" style="left:615px;top:37.4px;font-size:9px;font-weight:bold;line-height:10px;color:#22dfe6;white-space:pre;letter-spacing:-0.04px">60 FPS (52-62)</div>
<div class="abs" style="left:615px;top:50.9px;width:74px;height:30.1px;background:#0b1a33;opacity:0.8"></div>
<div class="abs" style="left:659.1px;top:62.9px;width:29.9px;height:18.1px;background:#27e2e6"></div>
<div class="abs" style="left:659.1px;top:62.2px;width:11px;height:1px;background:#27e2e6"></div>
<div class="abs" style="left:670.3px;top:62.4px;width:1.2px;height:1.8px;background:#0b1a33"></div>
<div class="ro" style="left:615.6px;top:397.2px;color:#ffaeaa;-webkit-text-stroke:0.2px #ffaeaa;text-shadow:0 0 3px #ffaeaaaa,0 0 6px #ffaeaa66">X:10.4375</div>
<div class="ro" style="left:615.6px;top:427.3px;color:#9df5a2;-webkit-text-stroke:0.2px #9df5a2;text-shadow:0 0 3px #9df5a2aa,0 0 6px #9df5a266">Y:7.6623</div>
<div class="ro" style="left:615.6px;top:458.7px;color:#aeabff;-webkit-text-stroke:0.2px #aeabff;text-shadow:0 0 3px #aeabffaa,0 0 6px #aeabff66">Z:0.5905511</div>
<div class="ro" style="left:615.6px;top:489.3px;color:#eaa0ea;-webkit-text-stroke:0.2px #eaa0ea;text-shadow:0 0 3px #eaa0eaaa,0 0 6px #eaa0ea66">E:0</div>
<div class="ro" style="left:615.6px;top:520.3px;color:#f5f59f;-webkit-text-stroke:0.2px #f5f59f;text-shadow:0 0 3px #f5f59faa,0 0 6px #f5f59f66">A:0</div>
</div>
<div class="abs" style="left:0;top:0;right:0;bottom:0;border-radius:10px;box-shadow:inset 0 0 0 1px rgba(200,210,235,.16)"></div>
</div>
</div></body></html>
